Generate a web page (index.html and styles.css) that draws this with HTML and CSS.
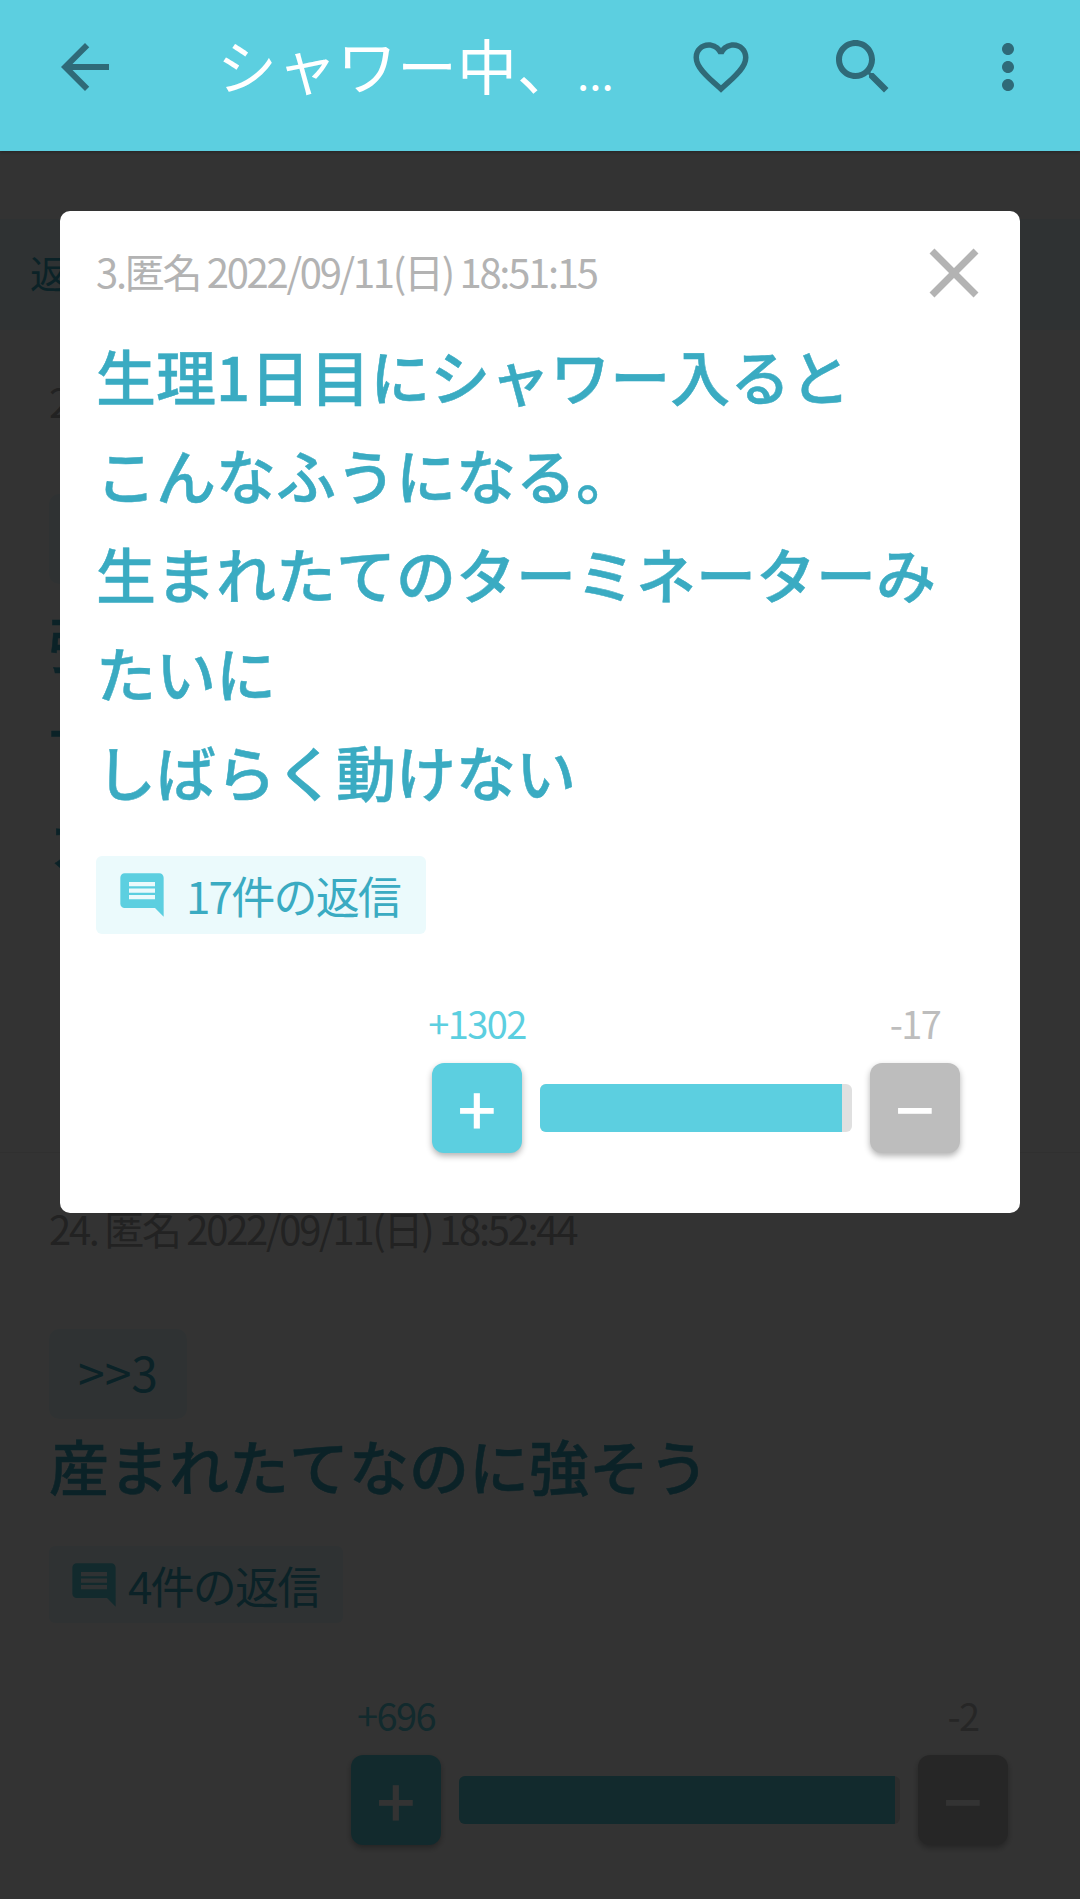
FILE: index.html
```html
<!DOCTYPE html>
<html lang="ja">
<head>
    <meta charset="UTF-8">
    <meta name="viewport" content="width=device-width, initial-scale=1.0">
    <title>シャワー中、…</title>
    <link rel="stylesheet" href="styles.css">
</head>
<body>
    <header class="app-bar">
        <svg class="bar-icon" viewBox="0 0 24 24"><path d="M20 11H7.83l5.59-5.59L12 4l-8 8 8 8 1.41-1.41L7.83 13H20v-2z"/></svg>
        <div class="app-title">シャワー中、<span class="title-dots">...</span></div>
        <div class="bar-actions">
            <svg class="bar-icon heart" viewBox="0 0 24 24"><path d="M16.5 3c-1.74 0-3.41.81-4.5 2.09C10.91 3.81 9.24 3 7.5 3 4.42 3 2 5.42 2 8.5c0 3.78 3.4 6.86 8.55 11.54L12 21.35l1.45-1.32C18.6 15.36 22 12.28 22 8.5 22 5.42 19.58 3 16.5 3zm-4.4 15.55l-.1.1-.1-.1C7.14 14.24 4 11.39 4 8.5 4 6.5 5.5 5 7.5 5c1.54 0 3.04.99 3.57 2.36h1.87C13.46 5.99 14.96 5 16.5 5c2 0 3.5 1.5 3.5 3.5 0 2.89-3.14 5.74-7.9 10.05z"/></svg>
            <svg class="bar-icon" viewBox="0 0 24 24"><path d="M15.5 14h-.79l-.28-.27C15.41 12.59 16 11.11 16 9.5 16 5.91 13.09 3 9.5 3S3 5.91 3 9.5 5.91 16 9.5 16c1.61 0 3.09-.59 4.23-1.57l.27.28v.79l5 4.99L20.49 19l-4.99-5zm-6 0C7.01 14 5 11.99 5 9.5S7.01 5 9.5 5 14 7.01 14 9.5 11.99 14 9.5 14z"/></svg>
            <svg class="bar-icon" viewBox="0 0 24 24"><path d="M12 8c1.1 0 2-.9 2-2s-.9-2-2-2-2 .9-2 2 .9 2 2 2zm0 2c-1.1 0-2 .9-2 2s.9 2 2 2 2-.9 2-2-.9-2-2-2zm0 6c-1.1 0-2 .9-2 2s.9 2 2 2 2-.9 2-2-.9-2-2-2z"/></svg>
        </div>
    </header>

    <main>
        <div class="notice">返信</div>

        <article class="post post-hidden">
            <div class="meta">23. 匿名</div>
            <div class="anchor"></div>
            <p class="body">強<br>世<br>カ</p>
        </article>

        <article class="post">
            <div class="meta">24. 匿名 2022/09/11(日) 18:52:44</div>
            <div class="anchor">&gt;&gt;3</div>
            <p class="body">産まれたてなのに強そう</p>
            <div class="replies">
                <svg class="reply-icon" viewBox="0 0 24 24"><path d="M21.99 4c0-1.1-.89-2-1.99-2H4c-1.1 0-2 .9-2 2v12c0 1.1.9 2 2 2h14l4 4-.01-18zM18 14H6v-2h12v2zm0-3H6V9h12v2zm0-3H6V6h12v2z"/></svg>
                4件の返信
            </div>
            <div class="vote vote-wide">
                <div class="vote-counts">
                    <span class="count-plus">+696</span>
                    <span class="count-minus">-2</span>
                </div>
                <div class="vote-row">
                    <div class="vote-btn btn-plus">+</div>
                    <div class="vote-bar"><div class="vote-fill" style="width: 98.9%"></div></div>
                    <div class="vote-btn btn-minus">−</div>
                </div>
            </div>
        </article>
    </main>

    <div class="overlay"></div>

    <section class="modal">
        <div class="modal-head">
            <div class="modal-meta">3.匿名 2022/09/11(日) 18:51:15</div>
            <svg class="close-icon" viewBox="0 0 50 50"><path d="M3 3l44 44M47 3L3 47"/></svg>
        </div>
        <p class="modal-body">生理1日目にシャワー入ると<br>こんなふうになる。<br>生まれたてのターミネーターみたいに<br>しばらく動けない</p>
        <div class="replies modal-replies">
            <svg class="reply-icon" viewBox="0 0 24 24"><path d="M21.99 4c0-1.1-.89-2-1.99-2H4c-1.1 0-2 .9-2 2v12c0 1.1.9 2 2 2h14l4 4-.01-18zM18 14H6v-2h12v2zm0-3H6V9h12v2zm0-3H6V6h12v2z"/></svg>
            17件の返信
        </div>
        <div class="vote vote-narrow">
            <div class="vote-counts">
                <span class="count-plus">+1302</span>
                <span class="count-minus">-17</span>
            </div>
            <div class="vote-row">
                <div class="vote-btn btn-plus">+</div>
                <div class="vote-bar"><div class="vote-fill" style="width: 96.8%"></div></div>
                <div class="vote-btn btn-minus">−</div>
            </div>
        </div>
    </section>
</body>
</html>
```

FILE: styles.css
```css
body {
    font-family: "Noto Sans CJK JP", "Noto Sans", sans-serif;
    margin: 0;
    padding: 0;
    background: white;
    color: #aaa;
    height: 1899px;
    overflow: hidden;
    position: relative;
}
.app-bar {
    position: relative;
    z-index: 3;
    display: flex;
    align-items: center;
    box-sizing: border-box;
    height: 151px;
    padding: 0 36px 17px 49px;
    background: #5ccfe0;
    box-shadow: 0 1px 3px rgba(0, 0, 0, 0.3);
}
.bar-icon {
    width: 72px;
    height: 72px;
    fill: #2f6a78;
    flex: none;
}
.bar-icon.heart {
    width: 66px;
    height: 66px;
}
.app-title {
    flex: 1;
    margin-left: 96px;
    color: white;
    font-size: 60px;
    line-height: 72px;
    white-space: nowrap;
}
.title-dots {
    font-size: 44px;
}
.bar-actions {
    display: flex;
    align-items: center;
    gap: 73px;
}
.notice {
    box-sizing: border-box;
    height: 111px;
    margin-top: 68px;
    padding-left: 30px;
    background: #ebfbfd;
    color: #3aabc2;
    font-size: 38px;
    line-height: 106px;
}
.post {
    box-sizing: border-box;
    padding: 50px 72px 0 49px;
}
.post-hidden {
    height: 823px;
    padding-top: 46px;
    border-bottom: 1px solid #eee;
}
.meta {
    font-size: 40px;
    line-height: 50px;
    letter-spacing: -2.3px;
    white-space: nowrap;
}
.anchor {
    width: 138px;
    height: 90px;
    margin-top: 76px;
    background: #ebfafc;
    border-radius: 10px;
    color: #3aabc2;
    font-size: 48px;
    line-height: 85px;
    text-align: center;
}
.post-hidden .anchor {
    margin-top: 68px;
}
.body {
    margin: -4px 0 4px;
    color: #3aabc2;
    font-size: 60px;
    font-weight: 500;
    line-height: 99px;
    -webkit-text-stroke: 0.5px #3aabc2;
}
.post-hidden .body {
    margin-top: 8px;
}
.replies {
    display: flex;
    align-items: center;
    width: 294px;
    height: 77px;
    box-sizing: border-box;
    margin-top: 32px;
    padding-left: 19px;
    gap: 8px;
    background: #ebfafc;
    border-radius: 6px;
    color: #3aabc2;
    font-size: 44px;
    letter-spacing: -1.8px;
    white-space: nowrap;
}
.reply-icon {
    width: 52px;
    height: 52px;
    fill: #5ccfe0;
    flex: none;
}
.vote {
    margin-left: auto;
}
.vote-wide {
    width: 657px;
    margin-top: 70px;
}
.vote-narrow {
    width: 528px;
    margin-top: 67px;
}
.vote-counts {
    display: flex;
    justify-content: space-between;
    font-size: 38px;
    line-height: 44px;
    letter-spacing: -1.6px;
}
.vote-counts span {
    display: flex;
    justify-content: center;
    width: 90px;
}
.count-plus {
    color: #5ccfe0;
}
.count-minus {
    color: #bdbdbd;
}
.vote-row {
    display: flex;
    align-items: center;
    gap: 18px;
    margin-top: 18px;
}
.vote-btn {
    width: 90px;
    height: 90px;
    flex: none;
    border-radius: 12px;
    color: white;
    font-size: 68px;
    font-weight: 500;
    line-height: 88px;
    text-align: center;
    box-shadow: 0 3px 6px rgba(0, 0, 0, 0.3);
}
.btn-plus {
    background: #5ccfe0;
}
.btn-minus {
    background: #bdbdbd;
}
.vote-bar {
    flex: 1;
    height: 48px;
    background: #e0e0e0;
    border-radius: 6px;
    overflow: hidden;
}
.vote-fill {
    height: 100%;
    background: #5ccfe0;
}
.overlay {
    position: absolute;
    top: 0;
    left: 0;
    right: 0;
    bottom: 0;
    z-index: 1;
    background: rgba(0, 0, 0, 0.8);
}
.modal {
    position: absolute;
    top: 211px;
    left: 60px;
    z-index: 2;
    box-sizing: border-box;
    width: 960px;
    padding: 36px 60px 60px 36px;
    background: white;
    border-radius: 10px;
}
.modal-head {
    display: flex;
    align-items: center;
    justify-content: space-between;
    height: 48px;
}
.modal-meta {
    color: #b3b3b3;
    font-size: 40px;
    letter-spacing: -2.3px;
    white-space: nowrap;
}
.close-icon {
    width: 50px;
    height: 50px;
    margin: 4px -19px 0 0;
    fill: none;
    stroke: #b3b3b3;
    stroke-width: 7;
}
.modal-body {
    margin: 30px 0 0;
    color: #3aabc2;
    font-size: 60px;
    font-weight: 500;
    line-height: 99px;
    -webkit-text-stroke: 0.5px #3aabc2;
}
.modal-replies {
    width: 330px;
    height: 78px;
    margin-top: 36px;
    padding-left: 20px;
    gap: 18px;
}
```
